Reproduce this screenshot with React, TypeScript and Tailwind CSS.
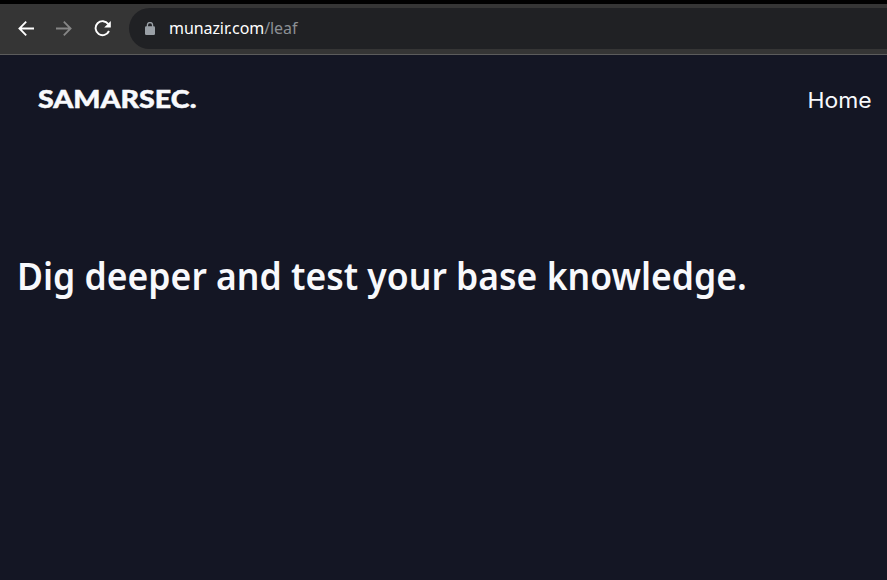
function BackIcon() {
  return (
    <svg width="16" height="16" viewBox="0 0 16 16" fill="none" stroke="#ffffff" strokeWidth="1.8">
      <path d="M16 7.5H1.5M8.2 0.7L1.4 7.5L8.2 14.3" />
    </svg>
  );
}

function ForwardIcon() {
  return (
    <svg width="16" height="16" viewBox="0 0 16 16" fill="none" stroke="#868686" strokeWidth="1.8">
      <path d="M0 7.5H14.5M7.8 0.7L14.6 7.5L7.8 14.3" />
    </svg>
  );
}

function ReloadIcon() {
  return (
    <svg width="18" height="18" viewBox="0 0 18 18" fill="none">
      <path d="M14.3 4.1A7 7 0 1 0 15 11" stroke="#ffffff" strokeWidth="1.9" />
      <path d="M16.8 0.9V7.5H10.2Z" fill="#ffffff" />
    </svg>
  );
}

function LockIcon() {
  return (
    <svg width="10" height="13" viewBox="0 0 10 13" fill="none">
      <path d="M2.4 5V3.2A2.6 2.6 0 0 1 7.6 3.2V5" stroke="#9aa0a6" strokeWidth="1.3" />
      <rect x="0" y="4.3" width="10" height="8.7" rx="1.2" fill="#9aa0a6" />
    </svg>
  );
}

export default function App() {
  return (
    <div className="flex h-[580px] w-[887px] flex-col overflow-hidden bg-[#141624] text-[#f8f9fc]">
      <div className="h-1 shrink-0 bg-black" />
      <div className="flex h-[51px] shrink-0 items-start border-b border-[#5c5c5c] bg-[#353535] pt-1">
        <div className="flex h-[41px] w-[129px] items-center pl-[18px]">
          <BackIcon />
          <span className="ml-[22px]"><ForwardIcon /></span>
          <span className="ml-[22px]"><ReloadIcon /></span>
        </div>
        <div className="flex h-[41px] flex-1 items-center rounded-l-full bg-[#202124] pl-4">
          <LockIcon />
          <span className="ml-[14px] whitespace-nowrap pb-[2px] font-['Noto_Sans',sans-serif] text-[16px] leading-5 tracking-[-0.08px] text-white">
            munazir.com<span className="text-[#8b8f93]">/leaf</span>
          </span>
        </div>
      </div>
      <header className="flex h-[90px] shrink-0 items-center justify-between pl-[38px] pr-[15px]">
        <span className="origin-left scale-x-[1.12] pb-[3px] font-['Lato',sans-serif] text-[25.5px] font-black leading-none [-webkit-text-stroke:0.5px_#f8f9fc]">SAMARSEC.</span>
        <a className="origin-right scale-x-[1.04] pb-px font-['Inter',sans-serif] text-[22px] leading-none">Home</a>
      </header>
      <main className="pl-[17px] pt-[102px]">
        <h1 className="w-max origin-left scale-x-[0.935] whitespace-nowrap font-['Noto_Sans',sans-serif] text-[38px] font-semibold leading-[56px]">
          Dig deeper and test your base knowledge.
        </h1>
      </main>
    </div>
  );
}
